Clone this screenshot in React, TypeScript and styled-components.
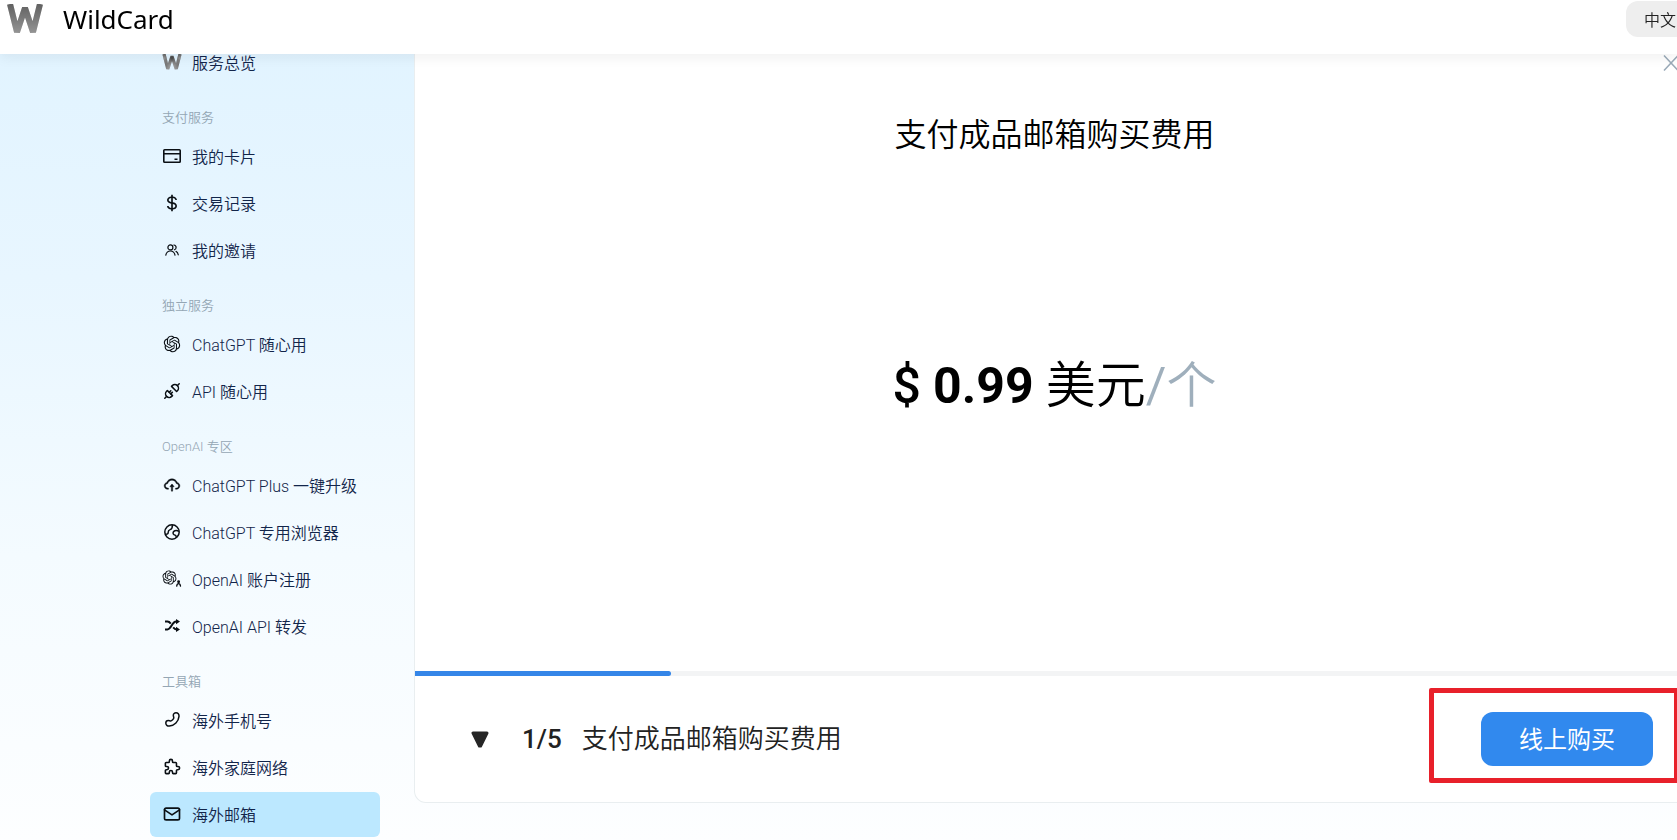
import React from 'react';
import styled, { createGlobalStyle, css } from 'styled-components';
import { RiOpenaiFill } from 'react-icons/ri';
import { TbMail, TbPuzzle } from 'react-icons/tb';
import { BiDollar } from 'react-icons/bi';
import { AiOutlineCloudUpload } from 'react-icons/ai';

const GlobalStyle = createGlobalStyle`
  *, *::before, *::after { box-sizing: border-box; }
  body {
    margin: 0;
    background: #fdfeff;
    font-family: Roboto, "Noto Sans CJK SC", sans-serif;
    font-size: 16px;
    color: #000;
  }
  button { font: inherit; border: 0; padding: 0; background: none; cursor: pointer; }
`;

const Page = styled.div`
  min-height: 100vh;
  padding-top: 40px;
  overflow: hidden;
  background: linear-gradient(180deg, #e0f3ff 0%, #e8f6ff 33%, #f4fbff 66%, #fdfeff 100%);
`;

const Header = styled.header`
  position: fixed;
  top: 0;
  left: 0;
  right: 0;
  z-index: 10;
  display: flex;
  align-items: center;
  justify-content: space-between;
  height: 54px;
  padding: 0 0 16px 6px;
  overflow-x: clip;
  background: #fff;
  box-shadow: 0 4px 12px rgba(0, 0, 0, 0.06);
`;

const Brand = styled.a`
  display: flex;
  align-items: center;
  gap: 19px;
  color: #000;
  text-decoration: none;
`;

const BrandName = styled.span`
  font-family: "Noto Sans", sans-serif;
  font-size: 26px;
  line-height: 36px;
`;

const LanguageButton = styled.button`
  height: 36px;
  margin: 0 -17px 0 0;
  padding: 0 18px;
  border-radius: 12px;
  background: #eee;
  color: #222;
  font-weight: 350;
  white-space: nowrap;
`;

const Main = styled.div`
  display: flex;
  align-items: stretch;
`;

const Sidebar = styled.nav`
  flex: none;
  display: flex;
  flex-direction: column;
  gap: 2px;
  width: 415px;
  padding: 0 35px 4px 150px;
`;

const SectionLabel = styled.h2`
  margin: 0;
  height: 45px;
  padding: 18px 12px 0;
  font-size: 13px;
  line-height: 26px;
  font-weight: 350;
  color: #94a6b4;
`;

const NavLink = styled.a<{ $active?: boolean }>`
  display: flex;
  align-items: center;
  gap: 11px;
  height: 45px;
  padding: 0 12px 2px 13px;
  border-radius: 6px;
  color: #12254a;
  font-weight: 350;
  text-decoration: none;
  white-space: nowrap;
  ${(p) => p.$active && css`background: #bce8ff;`}
`;

const IconSlot = styled.span`
  flex: none;
  display: flex;
  justify-content: center;
  width: 18px;
  height: 22px;
  align-items: center;
  color: #0a0f14;
  svg { flex: none; }
`;

const Panel = styled.main`
  flex: 1;
  min-width: 0;
  display: flex;
  flex-direction: column;
  margin: 0 -18px 38px -1px;
  border: 1px solid #e9eef0;
  border-top: 0;
  border-radius: 0 0 12px 12px;
  background: #fff;
`;

const PanelHead = styled.div`
  display: flex;
  justify-content: flex-end;
  padding: 15px 15px 0;
`;

const CloseButton = styled.button`
  display: flex;
  width: 16px;
  height: 16px;
  color: #9aaab8;
`;

const PanelBody = styled.div`
  flex: 1;
  display: flex;
  flex-direction: column;
  align-items: center;
  gap: 191px;
  padding-top: 40px;
`;

const Title = styled.h1`
  margin: 0;
  font-size: 32px;
  line-height: 48px;
  font-weight: 350;
`;

const Price = styled.p`
  margin: 0;
  font-size: 50px;
  line-height: 72px;
  font-weight: 350;
  white-space: nowrap;
`;

const Amount = styled.strong`
  font-weight: 700;
`;

const Currency = styled.span`
  font-weight: 500;
`;

const Unit = styled.span`
  color: #9fafbc;
`;

const Slash = styled.span`
  font-weight: 400;
`;

const ProgressTrack = styled.div`
  height: 5px;
  background: #f3f4f5;
`;

const ProgressBar = styled.div`
  height: 5px;
  border-radius: 0 3px 3px 0;
  background: #3586e8;
`;

const Footer = styled.footer`
  display: flex;
  align-items: center;
  justify-content: space-between;
  height: 126px;
  padding: 0 41px 0 56px;
`;

const StepInfo = styled.div`
  display: flex;
  align-items: center;
  gap: 20px;
  font-size: 26px;
  line-height: 40px;
  font-weight: 350;
  color: #222;
`;

const StepToggle = styled.button`
  display: flex;
  margin-right: 13px;
  color: #262626;
`;

const StepCount = styled.span`
  font-weight: 500;
`;

const Action = styled.div`
  position: relative;
`;

const BuyButton = styled.button`
  display: block;
  width: 172px;
  height: 54px;
  padding-bottom: 4px;
  border-radius: 12px;
  background: #3189ee;
  color: #fff;
  font-size: 24px;
  font-weight: 400;
`;

const Highlight = styled.div`
  position: absolute;
  top: -24px;
  right: -26px;
  bottom: -17px;
  left: -52px;
  border: 5px solid #e8202a;
  border-radius: 2px;
  pointer-events: none;
`;

function WMark({ width, height, id }: { width: number; height: number; id: string }) {
  return (
    <svg width={width} height={height} viewBox="0 0 37 30" aria-hidden="true">
      <defs>
        <linearGradient id={`${id}-shade`} x1="0" y1="0" x2="0" y2="30" gradientUnits="userSpaceOnUse">
          <stop offset="0" stopColor="#333" />
          <stop offset="1" stopColor="#777" />
        </linearGradient>
        <pattern id={`${id}-dots`} width="2" height="2" patternUnits="userSpaceOnUse">
          <rect width="1" height="1" fill="#fff" opacity="0.45" />
          <rect x="1" y="1" width="1" height="1" fill="#fff" opacity="0.45" />
        </pattern>
      </defs>
      {[`url(#${id}-shade)`, `url(#${id}-dots)`].map((stroke) => (
        <polyline
          key={stroke}
          points="3.500,0 10.500,28 18.500,4 26.500,28 33.500,0"
          fill="none"
          stroke={stroke}
          strokeWidth="6"
          strokeLinejoin="bevel"
        />
      ))}
    </svg>
  );
}

function CardIcon() {
  return (
    <svg width="18" height="14" viewBox="0 0 18 14" fill="none" stroke="currentColor" strokeWidth="1.6" aria-hidden="true">
      <rect x="0.8" y="0.8" width="16.4" height="12.4" rx="0.8" />
      <path d="M1 4.8h16M11.5 10.2h3" />
    </svg>
  );
}

function PeopleIcon() {
  return (
    <svg width="14" height="12" viewBox="0 0 14 12" fill="none" stroke="currentColor" strokeWidth="1.2" strokeLinecap="round" aria-hidden="true">
      <circle cx="5.4" cy="3.4" r="2.5" />
      <path d="M0.8 11.2c.5-2.800 2.300-4.200 4.600-4.200s4.100 1.400 4.600 4.200M8.800 1c1.600.2 2.300 1.200 2.300 2.400s-.6 2-1.700 2.400M11 7.400c1.300.6 2 1.800 2.300 3.400" />
    </svg>
  );
}

function PlugIcon() {
  return (
    <svg width="16" height="16" viewBox="0 0 16 16" fill="none" stroke="currentColor" strokeWidth="1.500" strokeLinecap="round" strokeLinejoin="round" aria-hidden="true">
      <path d="M0.800 15.200l1.700-1.700M15.200.8l-1.700 1.700" />
      <path d="M3.400 7.500l5.100 5.100-.8.800a3.600 3.600 0 0 1-5.100-5.100z" />
      <path d="M7.500 3.400l5.100 5.100.8-.8a3.600 3.600 0 0 0-5.100-5.100z" />
      <path d="M5.200 9.300l1.600-1.600M6.800 10.900l1.600-1.600" />
    </svg>
  );
}

function GlobeIcon() {
  return (
    <svg width="16" height="16" viewBox="0 0 16 16" fill="none" stroke="currentColor" strokeWidth="1.500" strokeLinejoin="round" aria-hidden="true">
      <circle cx="8" cy="8" r="7.200" />
      <path d="M1.200 10.200c2.200.2 3-.4 3-2 0-1.500.5-2.200 1.900-2.600 1.700-.5 2.400-1.500 2.300-4.600" />
      <path d="M15 7.400c-1.500-.9-2.900-1.100-4.200-.6-1.500.6-2.100 2-1.500 3.200.4.900 1.200 1.100 2 1.200.8.200 1 .8 1 2.500" />
    </svg>
  );
}

function AccountIcon() {
  return (
    <svg width="20" height="18" viewBox="0 0 20 18" aria-hidden="true">
      <RiOpenaiFill size={17} x="-1" y="-1" />
      <g fill="none" stroke="currentColor" strokeWidth="1.300" strokeLinecap="round">
        <circle cx="16.600" cy="11.700" r="0.800" fill="currentColor" />
        <path d="M14.700 16.200c.2-1.700.9-2.500 1.900-2.500s1.700.8 1.900 2.500" />
      </g>
    </svg>
  );
}

function ShuffleIcon() {
  return (
    <svg width="15" height="13" viewBox="0 0 15 13" fill="none" stroke="currentColor" strokeWidth="2" aria-hidden="true">
      <path d="M0 2.600h2.400c1.600 0 2.400.8 3.400 2M0 10.400h2.400c3.800 0 4.700-7.800 8.700-7.800h1.500M8.200 8.400c1 1.200 1.700 2 3.200 2h1.200" />
      <path d="M11 0v5.200l4-2.600zM11 7.800V13l4-2.600z" fill="currentColor" stroke="none" />
    </svg>
  );
}

function HandsetIcon() {
  return (
    <svg width="15" height="15" viewBox="0 0 15 15" fill="none" stroke="currentColor" strokeWidth="1.500" strokeLinejoin="round" aria-hidden="true">
      <path d="M8.300 3.300c0-1.400 1.200-2.500 2.700-2.500 1.900 0 3.200 1.500 3 3.600-.5 5.200-4.500 9.200-9.600 9.700-2.100.2-3.600-1.100-3.600-3 0-1.500 1.100-2.700 2.500-2.700 1.100 0 1.600.5 2.400.5 1 0 3.100-2.100 3.100-3.200 0-.8-.5-1.300-.5-2.400z" />
    </svg>
  );
}

type Entry =
  | { kind: 'label'; text: string }
  | { kind: 'link'; text: string; icon: React.ReactNode; active?: boolean };

const entries: Entry[] = [
  { kind: 'link', text: '服务总览', icon: <WMark id="nav" width={20} height={16} /> },
  { kind: 'label', text: '支付服务' },
  { kind: 'link', text: '我的卡片', icon: <CardIcon /> },
  { kind: 'link', text: '交易记录', icon: <BiDollar size={20} /> },
  { kind: 'link', text: '我的邀请', icon: <PeopleIcon /> },
  { kind: 'label', text: '独立服务' },
  { kind: 'link', text: 'ChatGPT 随心用', icon: <RiOpenaiFill size={20} /> },
  { kind: 'link', text: 'API 随心用', icon: <PlugIcon /> },
  { kind: 'label', text: 'OpenAI 专区' },
  { kind: 'link', text: 'ChatGPT Plus 一键升级', icon: <AiOutlineCloudUpload size={18} strokeWidth={24} /> },
  { kind: 'link', text: 'ChatGPT 专用浏览器', icon: <GlobeIcon /> },
  { kind: 'link', text: 'OpenAI 账户注册', icon: <AccountIcon /> },
  { kind: 'link', text: 'OpenAI API 转发', icon: <ShuffleIcon /> },
  { kind: 'label', text: '工具箱' },
  { kind: 'link', text: '海外手机号', icon: <HandsetIcon /> },
  { kind: 'link', text: '海外家庭网络', icon: <TbPuzzle size={19} /> },
  { kind: 'link', text: '海外邮箱', icon: <TbMail size={20} />, active: true },
];

const currentStep = 1;
const totalSteps = 5;

export default function App() {
  return (
    <>
      <GlobalStyle />
      <Header>
        <Brand href="#">
          <WMark id="brand" width={38} height={30} />
          <BrandName>WildCard</BrandName>
        </Brand>
        <LanguageButton type="button">中文</LanguageButton>
      </Header>
      <Page>
        <Main>
          <Sidebar>
            {entries.map((entry) =>
              entry.kind === 'label' ? (
                <SectionLabel key={entry.text}>{entry.text}</SectionLabel>
              ) : (
                <NavLink key={entry.text} href="#" $active={entry.active} aria-current={entry.active ? 'page' : undefined}>
                  <IconSlot>{entry.icon}</IconSlot>
                  {entry.text}
                </NavLink>
              ),
            )}
          </Sidebar>
          <Panel>
            <PanelHead>
              <CloseButton type="button" aria-label="关闭">
                <svg width="16" height="16" viewBox="0 0 16 16" stroke="currentColor" strokeWidth="1.500" aria-hidden="true">
                  <path d="M1 0.500l14 15M15 0.500l-14 15" />
                </svg>
              </CloseButton>
            </PanelHead>
            <PanelBody>
              <Title>支付成品邮箱购买费用</Title>
              <Price>
                <Currency>$</Currency> <Amount>0.99</Amount> 美元
                <Unit>
                  <Slash>/</Slash>个
                </Unit>
              </Price>
            </PanelBody>
            <ProgressTrack>
              <ProgressBar style={{ width: `${(currentStep / totalSteps) * 100}%` }} />
            </ProgressTrack>
            <Footer>
              <StepInfo>
                <StepToggle type="button" aria-label="展开步骤">
                  <svg width="18" height="17" viewBox="0 0 18 17" aria-hidden="true">
                    <path d="M2 2h14L9.600 15h-1.200z" fill="currentColor" stroke="currentColor" strokeWidth="3" strokeLinejoin="round" />
                  </svg>
                </StepToggle>
                <StepCount>
                  {currentStep}/{totalSteps}
                </StepCount>
                <span>支付成品邮箱购买费用</span>
              </StepInfo>
              <Action>
                <BuyButton type="button">线上购买</BuyButton>
                <Highlight />
              </Action>
            </Footer>
          </Panel>
        </Main>
      </Page>
    </>
  );
}
